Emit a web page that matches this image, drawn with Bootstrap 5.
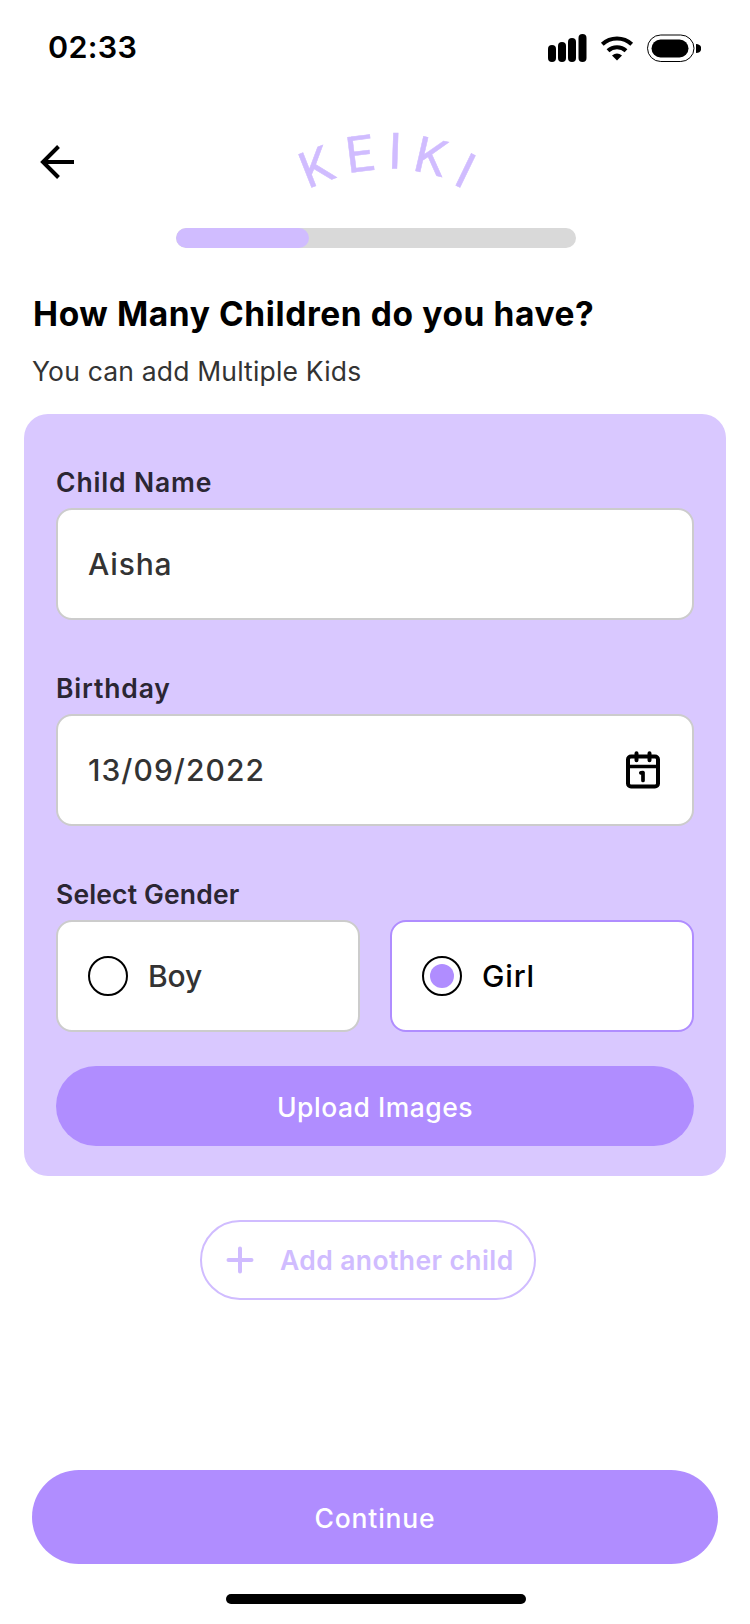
<!DOCTYPE html>
<html lang="en">
<head>
<meta charset="utf-8">
<meta name="viewport" content="width=device-width, initial-scale=1">
<title>Keiki</title>
<link rel="stylesheet" href="https://cdn.jsdelivr.net/npm/bootstrap@5.3.0/dist/css/bootstrap.min.css">
<style>
  :root { --violet: #b08dff; --lilac: #d0bcff; --panel: #d9c8ff; --ink: #333; }
  body { font-family: Inter, Roboto, sans-serif; color: #000; background: #fff; }
  svg { display: block; flex: none; }
  .screen { width: 750px; height: 1624px; }
  .status { height: 94px; padding: 0 49px 0 48px; }
  .clock { font-size: 30.5px; font-weight: 560; letter-spacing: .3px; line-height: 40px; }
  .topbar { height: 134px; padding: 13px 40px 0; }
  .back { margin-top: 38px; }
  .logo { margin-left: 199px; overflow: visible; }
  .logo text { font-family: Roboto, sans-serif; font-size: 50px; fill: var(--lilac); stroke: var(--lilac); stroke-width: .5px; }
  .steps { width: 400px; height: 20px; border-radius: 10px; background: #d9d9d9; }
  .steps .progress-bar { border-radius: 10px; background: var(--lilac); }
  .intro { padding: 46px 32px 0; height: 166px; }
  .intro h1 { font-size: 33.5px; line-height: 40px; font-weight: 700; letter-spacing: .6px; margin: 0 0 21px; padding-left: 1px; }
  .intro p { font-size: 26.5px; line-height: 32px; letter-spacing: .17px; color: var(--ink); }
  .panel { margin: 0 24px; padding: 52px 32px 30px; background: var(--panel); border: 0; border-radius: 24px; }
  .field { margin-bottom: 52px; }
  .field-title { font-size: 26.5px; line-height: 33px; font-weight: 600; letter-spacing: .85px; color: #2b2633; margin-bottom: 9px; display: block; }
  .field-title.tight { letter-spacing: .15px; }
  .box { height: 112px; border: 2px solid #ccc; border-radius: 16px; background: #fff; padding: 0 30px; font-size: 30px; font-weight: 550; letter-spacing: .85px; color: var(--ink); }
  .box.chosen { border-color: var(--violet); color: #000; }
  .date { letter-spacing: 1.05px; }
  .ring { width: 40px; height: 40px; border: 2px solid #000; border-radius: 50%; margin-right: 20px; }
  .dot { width: 24px; height: 24px; border-radius: 50%; background: var(--violet); }
  .pill { border: 0; border-radius: 50px; background: var(--violet); color: #fff; font-size: 26.5px; font-weight: 540; letter-spacing: .5px; line-height: 32px; }
  .pill:hover { background: var(--violet); color: #fff; }
  .upload { height: 80px; padding: 2px 0 0; }
  .add { width: 336px; height: 80px; margin: 44px 0 0 200px; padding: 1px 0 0 24px; background: #fff; border: 2px solid var(--lilac); border-radius: 40px; color: var(--lilac); font-size: 26.5px; font-weight: 560; letter-spacing: .4px; white-space: nowrap; }
  .add svg { margin: -1px 26px 0 0; }
  .go { height: 94px; margin: 0 32px 30px; padding: 2px 0 0; letter-spacing: .8px; }
  .home-bar { width: 300px; height: 10px; border-radius: 5px; background: #000; margin: 0 0 20px 226px; }
</style>
</head>
<body>
<main class="screen d-flex flex-column overflow-hidden">
  <div class="status d-flex align-items-center justify-content-between">
    <span class="clock">02:33</span>
    <svg width="153" height="28" viewBox="0 0 153 28" style="margin-top:1px">
      <rect x="0" y="11" width="8" height="17" rx="4"/><rect x="10" y="8" width="8" height="20" rx="4"/>
      <rect x="20" y="4" width="8" height="24" rx="4"/><rect x="30.500" y="0" width="8" height="28" rx="4"/>
      <g fill="none" stroke="#000" stroke-width="4"><path d="M54.300 10.200a21.500 21.500 0 0 1 29.400 0"/><path d="M60 16.800a13 13 0 0 1 18 0"/></g>
      <path d="M64 21.400a8.500 8.500 0 0 1 10 0L69 26.500z"/>
      <rect x="99.500" y="1" width="46.500" height="26.500" rx="13.250" fill="none" stroke="#000"/>
      <rect x="103.500" y="5.500" width="37" height="18" rx="9"/>
      <path d="M148 10c7 0 7 9 0 9z"/>
    </svg>
  </div>

  <header class="topbar d-flex align-items-start">
    <svg class="back" width="35" height="34" viewBox="0 0 35 34" fill="none" stroke="#000" stroke-width="4"><path d="M34 17H3M18.500 1.500L3 17l15.500 15.500"/></svg>
    <svg class="logo" width="230" height="106" viewBox="274 107 230 106" role="img" aria-label="Keiki">
      <text transform="translate(311.500 187.500) rotate(-21.500)" x="-4">K</text>
      <text transform="translate(351.700 172.500) rotate(-7)" x="-4">E</text>
      <text transform="translate(392.300 168.500) rotate(2)" x="-4.500">I</text>
      <text transform="translate(415.300 171) rotate(13)" x="-4">K</text>
      <text transform="translate(455.700 185.500) rotate(25.800)" x="-4.500">I</text>
    </svg>
  </header>

  <div class="progress steps mx-auto flex-shrink-0" style="transform:translateX(1px)"><div class="progress-bar" style="width:33.250%"></div></div>

  <section class="intro">
    <h1>How Many Children do you have?</h1>
    <p class="m-0">You can add Multiple Kids</p>
  </section>

  <section class="panel card">
    <div class="field">
      <span class="field-title">Child Name</span>
      <div class="box d-flex align-items-center">Aisha</div>
    </div>
    <div class="field">
      <span class="field-title">Birthday</span>
      <div class="box date d-flex align-items-center justify-content-between">
        <span>13/09/2022</span>
        <svg width="36" height="38" viewBox="1.500 0 36 38" style="overflow:visible" fill="none" stroke="#000" stroke-width="4" stroke-linecap="round" stroke-linejoin="round">
          <rect x="3.500" y="5.500" width="30" height="30" rx="3"/><path d="M4 15.500h29" stroke-width="3.500"/><path d="M12 2.200v7M25 2.200v7"/>
          <path d="M16.300 21.800L18.500 21.500V29.500" stroke-width="3.700"/>
        </svg>
      </div>
    </div>
    <div>
      <span class="field-title tight">Select Gender</span>
      <div class="d-flex" style="gap:30px">
        <div class="box d-flex align-items-center flex-fill w-50"><span class="ring"></span><span style="letter-spacing:-.1px">Boy</span></div>
        <div class="box chosen d-flex align-items-center flex-fill w-50"><span class="ring d-flex align-items-center justify-content-center"><span class="dot"></span></span>Girl</div>
      </div>
    </div>
    <button class="btn pill upload w-100" style="margin-top:34px">Upload Images</button>
  </section>

  <button class="btn add d-flex align-items-center flex-shrink-0">
    <svg width="28" height="28" viewBox="0 0 28 28" stroke="#d0bcff" stroke-width="4" stroke-linecap="round"><path d="M14 2.500v23M2.500 14h23"/></svg>
    Add another child
  </button>

  <button class="btn pill go mt-auto flex-shrink-0">Continue</button>
  <div class="home-bar flex-shrink-0"></div>
</main>
<script src="https://cdn.jsdelivr.net/npm/bootstrap@5.3.0/dist/js/bootstrap.bundle.min.js"></script>
</body>
</html>
